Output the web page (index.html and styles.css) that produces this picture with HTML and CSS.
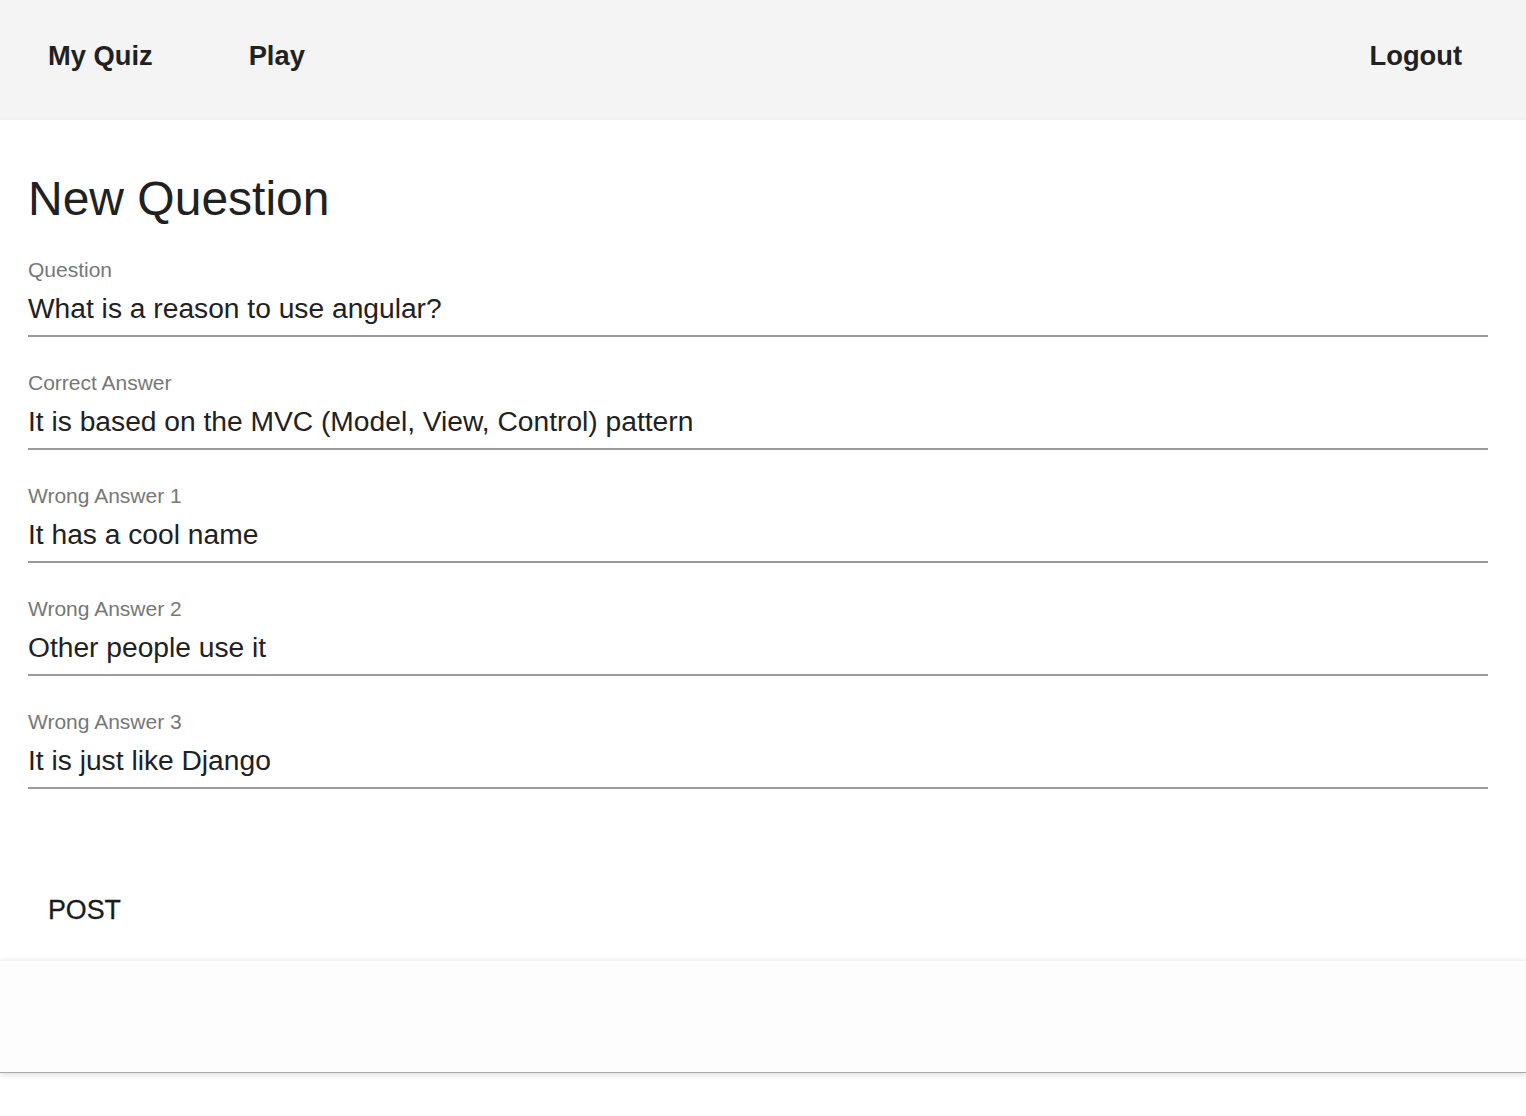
FILE: index.html
```html
<!DOCTYPE html>
<html lang="en">
<head>
<meta charset="utf-8">
<title>New Question</title>
<link rel="stylesheet" href="styles.css">
</head>
<body>
<header class="toolbar">
  <a class="nav-btn" href="#">My Quiz</a>
  <a class="nav-btn" href="#">Play</a>
  <a class="nav-btn nav-right" href="#">Logout</a>
</header>
<main class="card">
  <h1 class="title">New Question</h1>
  <form class="form">
    <div class="field">
      <label class="field-label">Question</label>
      <div class="field-input">What is a reason to use angular?</div>
    </div>
    <div class="field">
      <label class="field-label">Correct Answer</label>
      <div class="field-input">It is based on the MVC (Model, View, Control) pattern</div>
    </div>
    <div class="field">
      <label class="field-label">Wrong Answer 1</label>
      <div class="field-input">It has a cool name</div>
    </div>
    <div class="field">
      <label class="field-label">Wrong Answer 2</label>
      <div class="field-input">Other people use it</div>
    </div>
    <div class="field">
      <label class="field-label">Wrong Answer 3</label>
      <div class="field-input">It is just like Django</div>
    </div>
    <div class="actions">
      <button type="button" class="post-btn">POST</button>
    </div>
  </form>
</main>
<footer class="footer"></footer>
</body>
</html>
```

FILE: styles.css
```css
html, body {
  margin: 0;
  padding: 0;
  background: #ffffff;
}
body {
  font-family: "Liberation Sans", Arial, sans-serif;
  color: #212121;
  padding-bottom: 40px;
}
.toolbar {
  height: 120px;
  box-sizing: border-box;
  background: #f4f4f4;
  display: flex;
  align-items: center;
  padding: 0 44px 0 28px;
  gap: 56px;
  box-shadow: inset 0 -4px 4px -3px rgba(0, 0, 0, 0.04);
}
.nav-btn {
  font-size: 27.3px;
  font-weight: 700;
  color: #212121;
  text-decoration: none;
  padding: 0 20px;
  line-height: 36px;
  margin-top: -8px;
}
.nav-right {
  margin-left: auto;
}
.card {
  padding: 50px 38px 32px 28px;
  background: #ffffff;
}
.title {
  margin: 0;
  font-size: 48px;
  font-weight: 400;
  line-height: 57.6px;
  color: #212121;
}
.form {
  margin: 30px 0 0;
}
.field {
  margin-bottom: 34px;
  border-bottom: 2px solid #9a9a9a;
  padding-bottom: 9px;
}
.field-label {
  display: block;
  font-size: 21px;
  line-height: 24px;
  color: #777777;
  margin-bottom: 8px;
}
.field-input {
  font-size: 28.2px;
  line-height: 36px;
  color: #212121;
}
.actions {
  padding-top: 69px;
}
.post-btn {
  font-family: "Liberation Sans", Arial, sans-serif;
  font-size: 26.8px;
  line-height: 36px;
  padding: 0 20px;
  border: 0;
  background: transparent;
  color: #1a1a1a;
  cursor: pointer;
  -webkit-text-stroke: 0.3px #1a1a1a;
}
.footer {
  position: relative;
  height: 111px;
  background: #fdfdfd;
  border-top: 1px solid #f3f3f3;
  border-bottom: 1px solid #a8a8a8;
  box-shadow: 0 -6px 8px -4px rgba(0, 0, 0, 0.025), 0 2px 6px rgba(0, 0, 0, 0.14);
}
```
